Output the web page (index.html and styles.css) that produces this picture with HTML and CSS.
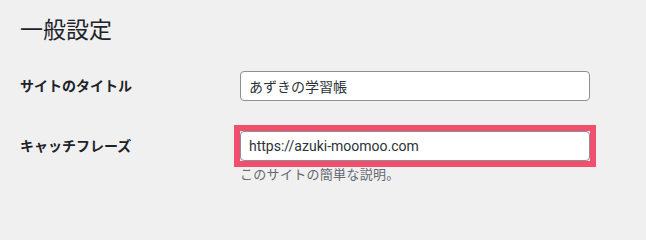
FILE: index.html
```html
<!DOCTYPE html>
<html lang="ja">
<head>
<meta charset="utf-8">
<title>一般設定</title>
<link rel="stylesheet" href="styles.css">
</head>
<body>
<div class="wrap">
  <h1 class="title">一般設定</h1>
  <div class="form">
    <div class="row row-first">
      <label class="label" for="blogname">サイトのタイトル</label>
      <div class="field">
        <input class="text-input" id="blogname" type="text" value="あずきの学習帳">
      </div>
    </div>
    <div class="row row-second">
      <label class="label" for="tagline">キャッチフレーズ</label>
      <div class="field">
        <div class="highlight">
          <input class="text-input" id="tagline" type="text" value="https://azuki-moomoo.com">
        </div>
        <p class="description">このサイトの簡単な説明。</p>
      </div>
    </div>
  </div>
</div>
</body>
</html>
```
FILE: styles.css
```css
html, body {
  margin: 0;
  padding: 0;
  background: #f0f0f1;
}
body {
  font-family: Roboto, "Noto Sans CJK JP", sans-serif;
  color: #1d2327;
  font-size: 14px;
}
.wrap {
  padding: 0 20px;
}
.title {
  margin: 0;
  padding-top: 16px;
  font-size: 23px;
  font-weight: 400;
  line-height: 30px;
  color: #1d2327;
}
.form {
  margin-top: 25px;
}
.row {
  display: flex;
  align-items: flex-start;
}
.row-second {
  margin-top: 24px;
}
.label {
  width: 220px;
  flex: none;
  font-weight: 700;
  font-size: 14px;
  line-height: 30px;
  color: #1d2327;
}
.row-second .label {
  margin-top: 6px;
}
.field {
  width: 350px;
}
.text-input {
  box-sizing: border-box;
  display: block;
  width: 350px;
  height: 30px;
  margin: 0;
  padding: 0 8px;
  border: 1px solid #8c8f94;
  border-radius: 4px;
  background: #fff;
  font-family: Roboto, "Noto Sans CJK JP", sans-serif;
  font-size: 14px;
  color: #2c3338;
}
.highlight {
  margin-left: -6px;
  width: 350px;
  border: 6px solid #f14f6e;
}
.description {
  margin: -1px 0 0;
  font-size: 13px;
  letter-spacing: 0.3px;
  line-height: 18px;
  color: #646970;
}
```
